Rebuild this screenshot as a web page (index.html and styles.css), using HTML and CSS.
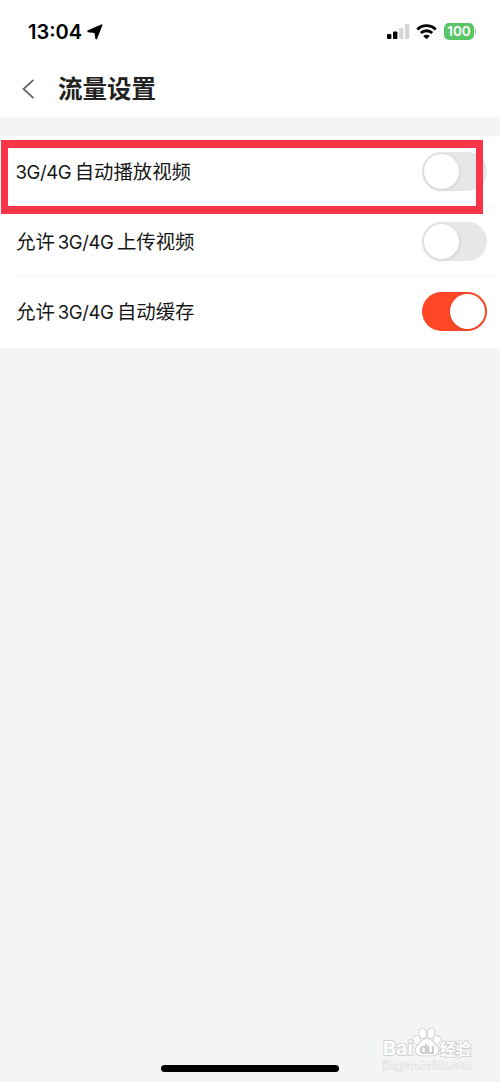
FILE: index.html
```html
<!DOCTYPE html>
<html lang="zh-CN">
<head>
    <meta charset="UTF-8">
    <meta name="viewport" content="width=device-width, initial-scale=1.0">
    <title>流量设置</title>
    <link rel="stylesheet" href="styles.css">
</head>
<body>
    <div class="status-bar">
        <span class="time">13:04</span>
        <svg class="location" width="16" height="16" viewBox="0 0 16 16">
            <path d="M15.400 1.200 10.200 14.600Q9.300 16.400 8.400 14.800L7.400 9 1.200 8.200Q-.6 7.200 1 6.200L14.200 .5Q15.800 0 15.400 1.200Z"/>
        </svg>
        <div class="status-icons">
            <svg class="signal" width="23" height="15" viewBox="0 0 23 15">
                <rect x="0" y="10" width="4.4" height="5" rx="1"/>
                <rect x="6" y="7.5" width="4.4" height="7.5" rx="1"/>
                <rect class="weak" x="12" y="4" width="4.4" height="11" rx="1"/>
                <rect class="weak" x="18" y="0" width="4.4" height="15" rx="1"/>
            </svg>
            <svg class="wifi" width="21" height="16" viewBox="0 0 21 16">
                <path class="arc" d="M1.3 5.4C6.5.4 14.5.4 19.7 5.4M4.8 9C8 6 13 6 16.2 9"/>
                <path d="M7.2 11.9Q10.5 9.4 13.8 11.9L10.5 15.3Z"/>
            </svg>
            <span class="battery">100</span>
            <span class="battery-tip"></span>
        </div>
    </div>

    <header class="header">
        <svg class="back" width="13" height="20" viewBox="0 0 13 20">
            <path d="M11.5 .8 1.5 10 11.5 19.2"/>
        </svg>
        <h1>流量设置</h1>
    </header>

    <main class="settings">
        <div class="row">
            <div class="label"><span class="latin first">3G/4G</span>自动播放视频</div>
            <div class="switch"></div>
        </div>
        <div class="row">
            <div class="label">允许<span class="latin">3G/4G</span>上传视频</div>
            <div class="switch"></div>
        </div>
        <div class="row">
            <div class="label">允许<span class="latin">3G/4G</span>自动缓存</div>
            <div class="switch on"></div>
        </div>
        <div class="highlight"></div>
    </main>

    <div class="watermark">
        <svg width="94" height="50" viewBox="0 0 94 50">
            <g class="mark">
                <text class="brand" x="1" y="30" textLength="30" lengthAdjust="spacingAndGlyphs">Bai</text>
                <ellipse cx="35" cy="15" rx="3.200" ry="4" transform="rotate(-15 35 15)"/>
                <ellipse cx="40.800" cy="8.500" rx="3.500" ry="4.800" transform="rotate(-8 40.800 8.500)"/>
                <ellipse cx="49" cy="8.500" rx="3.500" ry="4.800" transform="rotate(8 49 8.500)"/>
                <ellipse cx="54.800" cy="15" rx="3.200" ry="4" transform="rotate(15 54.800 15)"/>
                <path d="M45 14C40 14 39.500 17.500 36 20.500C32.500 23.500 33 30.500 39 30.500H51C57 30.500 57.500 23.500 54 20.500C50.500 17.500 50 14 45 14Z"/>
                <text class="cn" x="58" y="29.500" textLength="31">经验</text>
            </g>
            <text class="du" x="37.500" y="28.500" textLength="15">du</text>
            <text class="url" x="1" y="43.500" textLength="89">jingyan.baidu.com</text>
        </svg>
    </div>
    <div class="home-indicator"></div>
</body>
</html>
```
FILE: styles.css
```css
* {
    box-sizing: border-box;
}

body {
    margin: 0;
    height: 1082px;
    position: relative;
    overflow: hidden;
    background-color: #f3f4f6;
    color: #161616;
    font-family: Inter, "Noto Sans CJK SC", sans-serif;
}

.status-bar {
    display: flex;
    align-items: center;
    height: 63px;
    padding: 0 24px 0 28px;
    background-color: #fff;
    color: #000;
}

.time {
    font-size: 20px;
    font-weight: 600;
    line-height: 24px;
}

.location {
    margin-left: 5px;
}

.status-icons {
    display: flex;
    align-items: center;
    margin-left: auto;
}

.weak {
    fill: #d6d6d6;
}

.wifi {
    margin: 0 7px 0 6px;
}

.arc {
    fill: none;
    stroke: #000;
    stroke-width: 2.8;
}

.battery {
    width: 30px;
    height: 17px;
    border-radius: 5px;
    background-color: #5ac468;
    color: #fff;
    font-size: 13.5px;
    font-weight: 600;
    line-height: 17px;
    text-align: center;
}

.battery-tip {
    width: 1px;
    height: 5px;
    margin-left: 1px;
    background-color: #8bd394;
}

.header {
    display: flex;
    align-items: center;
    height: 54px;
    padding: 0 22px 3px;
    background-color: #fff;
}

.back path {
    fill: none;
    stroke: #666;
    stroke-width: 1.8;
}

.header h1 {
    margin: 1px 0 0 23px;
    font-size: 24.5px;
    font-weight: 600;
    line-height: 34px;
    color: #222;
}

.settings {
    position: relative;
    margin-top: 19px;
    height: 212px;
    background-color: #fff;
}

.row {
    display: flex;
    align-items: center;
    justify-content: space-between;
    height: 70.2px;
    margin-left: 16px;
    padding-right: 13px;
}

.row + .row {
    border-top: 1px solid #f7f7f7;
}

.label {
    margin-top: 1px;
    font-size: 19.4px;
    line-height: 28px;
    white-space: nowrap;
}

.latin {
    margin: 0 3.5px 0 3px;
    font-size: 18.5px;
    letter-spacing: -0.4px;
}

.latin.first {
    margin-left: -0.5px;
}

.switch {
    width: 65px;
    height: 39px;
    padding: 2px;
    border-radius: 20px;
    background-color: #e7e7e9;
}

.switch::before {
    content: "";
    display: block;
    width: 35px;
    height: 35px;
    border-radius: 50%;
    background-color: #fff;
    box-shadow: 0 1px 4px rgba(0, 0, 0, 0.12);
}

.switch.on {
    background-color: #ff4726;
}

.switch.on::before {
    margin-left: 26px;
}

/* Frame laid over the first setting */
.highlight {
    position: absolute;
    top: 4px;
    left: 1px;
    width: 482px;
    height: 74px;
    border: 8px solid #f93548;
    border-width: 8px 7px;
}

.watermark {
    position: absolute;
    left: 382px;
    top: 1025px;
}

.watermark svg {
    display: block;
}

.mark {
    fill: #fff;
    stroke: #cdced0;
    stroke-width: 1.6;
    paint-order: stroke;
}

.brand {
    font-size: 19px;
    font-weight: 700;
}

.cn {
    font-size: 15.5px;
    font-weight: 700;
}

.du {
    font-size: 13px;
    font-weight: 600;
    fill: #c4c5c7;
}

.url {
    font-size: 10px;
    fill: #fff;
    stroke: #d8d9db;
    stroke-width: 1.2;
    paint-order: stroke;
}

.home-indicator {
    position: absolute;
    left: 161px;
    top: 1065px;
    width: 178px;
    height: 7px;
    border-radius: 4px;
    background-color: #000;
}
```
